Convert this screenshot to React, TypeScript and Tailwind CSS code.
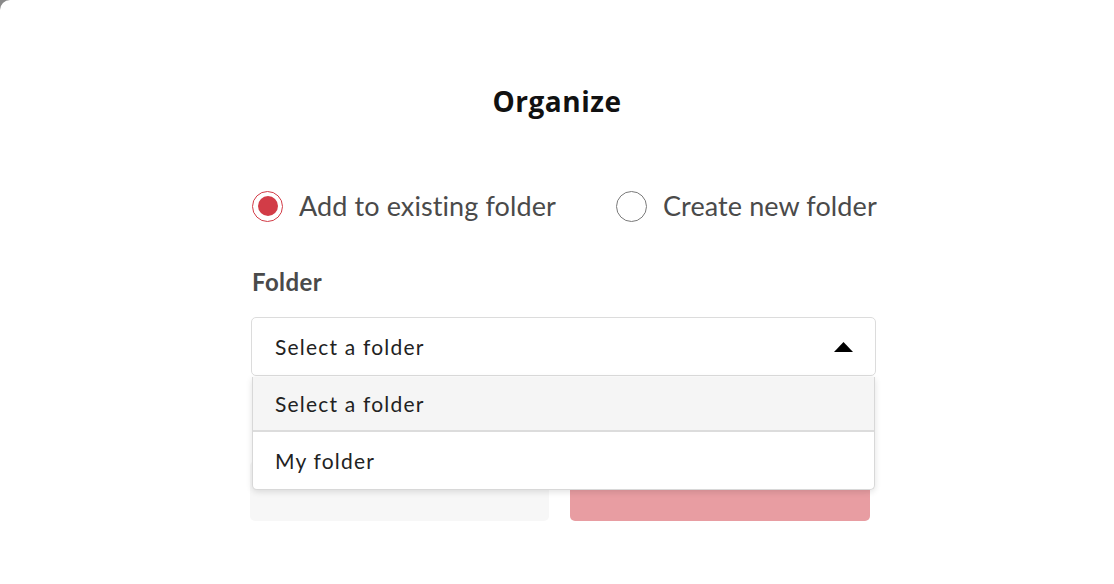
import { useState } from "react"

const font = { fontFamily: "'Lato', 'Noto Sans', sans-serif" }

const Radio = ({ checked, label }: { checked?: boolean; label: string }) => (
  <label className="flex shrink-0 items-center gap-4 whitespace-nowrap cursor-pointer">
    <span
      className={
        checked
          ? "flex h-[31px] w-[31px] shrink-0 items-center justify-center rounded-full border-[1.5px] border-[#d23c47]"
          : "flex h-[31px] w-[31px] shrink-0 items-center justify-center rounded-full border-[1.5px] border-[#7a7a7a]"
      }
    >
      {checked && <span className="h-[20px] w-[20px] rounded-full bg-[#d23c47]" />}
    </span>
    <span className="text-[27px] leading-8 tracking-[0.1px] text-[#4a4a4a]">{label}</span>
  </label>
)

export default function App() {
  const [open] = useState(true)

  return (
    <div className="h-[584px] w-[1114px] bg-[#8a8a8a]" style={font}>
      <div className="h-full w-full overflow-hidden rounded-tl-[10px] bg-white pt-[83px]">
        <h1 className="text-center font-['Open_Sans',sans-serif] text-[28px] font-bold leading-9 tracking-[0.5px] text-[#111]">
          Organize
        </h1>

        <div className="ml-[251px] w-[625px]">
          <div className="mt-[71px] flex gap-[60px] pl-[1px]">
            <Radio checked label="Add to existing folder" />
            <Radio label="Create new folder" />
          </div>

          <div className="mt-[45px] pl-[1px] text-[24px] font-bold leading-[30px] tracking-[0.4px] text-[#4a4a4a]">
            Folder
          </div>

          <div className="relative mt-[20px]">
            <div className="flex h-[59px] items-center justify-between rounded-[5px] border border-[#dcdcdc] bg-white pl-[23px] pr-[22px]">
              <span className="text-[21px] tracking-[1.2px] text-[#222]">Select a folder</span>
              <svg width="19" height="10" viewBox="0 0 19 10">
                <path d="M9.5 0 L19 10 L0 10 Z" fill="#000" />
              </svg>
            </div>

            {open && (
              <div className="absolute left-[1px] right-[1px] top-[60px] z-10 overflow-hidden rounded-b-[5px] border border-t-0 border-[#d8d8d8] bg-white shadow-[0_2px_6px_rgba(0,0,0,0.12)]">
                <div className="flex h-[55px] items-center border-b-2 border-[#dcdcdc] bg-[#f5f5f5] pl-[22px] text-[21px] tracking-[1.2px] text-[#222]">
                  Select a folder
                </div>
                <div className="flex h-[57px] items-center pl-[22px] text-[21px] tracking-[1.2px] text-[#222]">
                  My folder
                </div>
              </div>
            )}

            <div className="mt-[85px] flex w-[620px] -translate-x-[1px] gap-[21px]">
              <button className="h-[60px] w-[299px] rounded-[5px] bg-[#f7f7f7]" />
              <button className="h-[60px] w-[300px] rounded-[5px] bg-[#e89da2]" />
            </div>
          </div>
        </div>
      </div>
    </div>
  )
}
